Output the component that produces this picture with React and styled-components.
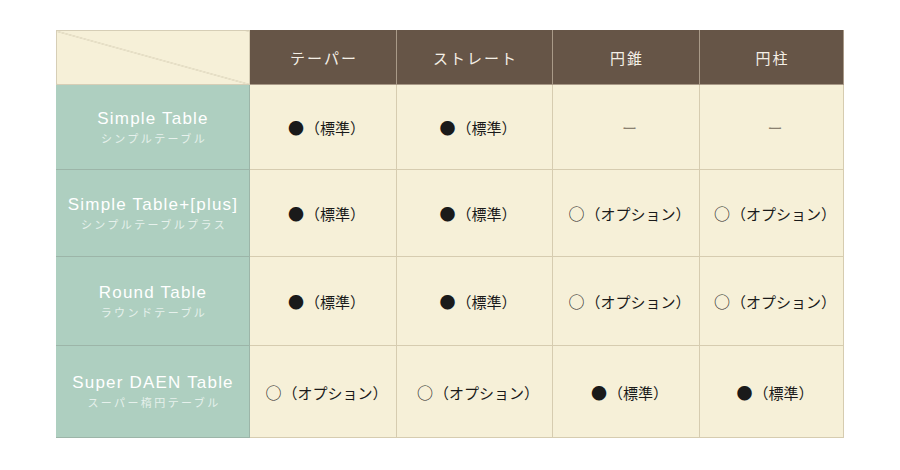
import styled, { createGlobalStyle } from "styled-components";

const GlobalStyle = createGlobalStyle`
  body {
    margin: 0;
    background: #ffffff;
    font-family: "Noto Sans CJK JP", "Liberation Sans", sans-serif;
  }
`;

const columns = ["テーパー", "ストレート", "円錐", "円柱"];
const widths = [193, 147, 156, 147, 144];

const STD = { mark: "●", text: "（標準）" };
const OPT = { mark: "○", text: "（オプション）" };
const NONE = null;

const rows = [
  { name: "Simple Table", kana: "シンプルテーブル", height: 85, cells: [STD, STD, NONE, NONE] },
  { name: "Simple Table+[plus]", kana: "シンプルテーブルプラス", height: 87, cells: [STD, STD, OPT, OPT] },
  { name: "Round Table", kana: "ラウンドテーブル", height: 89, cells: [STD, STD, OPT, OPT] },
  { name: "Super DAEN Table", kana: "スーパー楕円テーブル", height: 92, cells: [OPT, OPT, STD, STD] },
];

const Wrapper = styled.section`
  padding: 30px 0 0 56px;
`;

const Table = styled.table`
  border-collapse: collapse;
  table-layout: fixed;
  width: 788px;
`;

const Corner = styled.th`
  height: 53px;
  padding: 0;
  border: 1px solid #d6ceb6;
  background:
    linear-gradient(to top right, transparent calc(50% - 0.6px), #cbc2a8 50%, transparent calc(50% + 0.6px)),
    #f6f0d8;
`;

const HeadCell = styled.th`
  padding: 0 0 0 2px;
  background: #665547;
  border: 1px solid #a99a88;
  border-top-color: #665547;
  color: #f4efe6;
  font-weight: 400;
  font-size: 15px;
  letter-spacing: 2px;
  text-align: center;
`;

const Label = styled.th`
  padding: 0;
  background: #aecfc0;
  border: 1px solid #9cb5a8;
  border-left-color: #aecfc0;
  font-weight: 400;
  text-align: center;
  vertical-align: middle;
`;

const LabelName = styled.div`
  font-family: "Liberation Sans", Arial, sans-serif;
  font-size: 17px;
  letter-spacing: 1.2px;
  color: #ffffff;
  line-height: 20px;
  margin-top: 1px;
`;

const LabelKana = styled.div`
  font-family: "Noto Sans CJK JP", sans-serif;
  font-size: 11px;
  letter-spacing: 2.4px;
  padding-left: 2px;
  color: #e6f1ec;
  line-height: 18px;
`;

const Cell = styled.td`
  padding: 0 0 0 7px;
  background: #f6f0d8;
  border: 1px solid #d6ccb0;
  text-align: center;
  vertical-align: middle;
  font-size: 15px;
  color: #1a1a1a;
  white-space: nowrap;
`;

const Mark = styled.span`
  font-size: 16px;
  margin-right: 1px;
`;

const Dash = styled.span`
  color: #8a8070;
  font-size: 15px;
`;

export default function App() {
  return (
    <>
      <GlobalStyle />
      <Wrapper>
        <Table>
          <colgroup>
            {widths.map((w, i) => (
              <col key={i} style={{ width: w }} />
            ))}
          </colgroup>
          <thead>
            <tr>
              <Corner />
              {columns.map((c) => (
                <HeadCell key={c}>{c}</HeadCell>
              ))}
            </tr>
          </thead>
          <tbody>
            {rows.map((r) => (
              <tr key={r.name} style={{ height: r.height }}>
                <Label>
                  <LabelName>{r.name}</LabelName>
                  <LabelKana>{r.kana}</LabelKana>
                </Label>
                {r.cells.map((c, i) => (
                  <Cell key={i}>
                    {c ? (
                      <>
                        <Mark>{c.mark}</Mark>
                        {c.text}
                      </>
                    ) : (
                      <Dash>ー</Dash>
                    )}
                  </Cell>
                ))}
              </tr>
            ))}
          </tbody>
        </Table>
      </Wrapper>
    </>
  );
}
